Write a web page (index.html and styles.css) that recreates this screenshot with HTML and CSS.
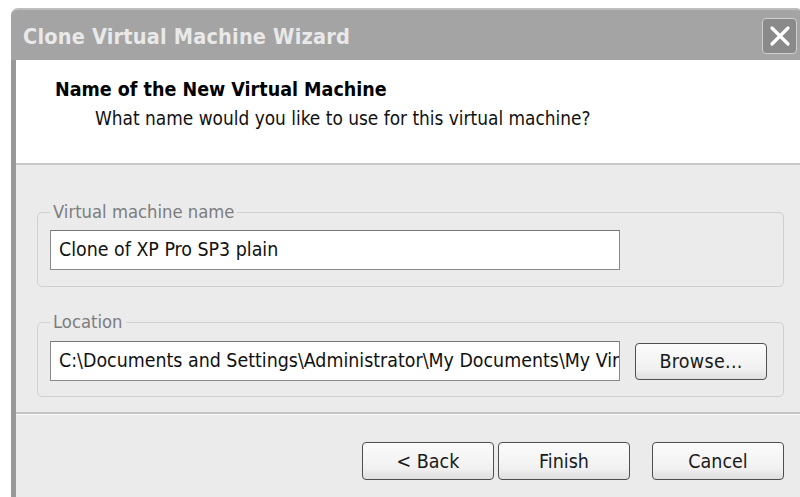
FILE: index.html
```html
<!DOCTYPE html>
<html lang="en">
<head>
<meta charset="utf-8">
<title>Clone Virtual Machine Wizard</title>
<link rel="stylesheet" href="styles.css">
</head>
<body>
<div class="window">
  <div class="titlebar">
    <span class="title">Clone Virtual Machine Wizard</span>
    <button class="close" aria-label="Close">
      <svg width="22" height="22" viewBox="0 0 22 22"><path d="M3 3 L19 19 M19 3 L3 19" stroke="#fff" stroke-width="3.2" stroke-linecap="round" fill="none"/></svg>
    </button>
  </div>
  <div class="frame">
    <div class="header">
      <h1 class="heading">Name of the New Virtual Machine</h1>
      <p class="subtitle">What name would you like to use for this virtual machine?</p>
    </div>
    <div class="content">
      <fieldset class="group group-name">
        <legend>Virtual machine name</legend>
        <div class="row">
          <div class="field">Clone of XP Pro SP3 plain</div>
        </div>
      </fieldset>
      <fieldset class="group group-location">
        <legend>Location</legend>
        <div class="row">
          <div class="field">C:\Documents and Settings\Administrator\My Documents\My Virtual Machines</div>
          <button class="btn browse">Browse...</button>
        </div>
      </fieldset>
      <div class="separator"></div>
      <div class="actions">
        <button class="btn">&lt; Back</button>
        <button class="btn">Finish</button>
        <button class="btn cancel">Cancel</button>
      </div>
    </div>
  </div>
</div>
</body>
</html>
```

FILE: styles.css
```css
html, body {
  margin: 0;
  padding: 0;
  background: #ffffff;
  overflow: hidden;
}

body {
  width: 800px;
  height: 497px;
  font-family: "DejaVu Sans Condensed", "DejaVu Sans", sans-serif;
}

.window {
  margin: 8px 0 0 11px;
  width: 792px;
}

.titlebar {
  height: 52px;
  box-sizing: border-box;
  background: #a4a4a4;
  border-top: 2px solid #bdbdbd;
  border-radius: 7px 7px 0 0;
  display: flex;
  align-items: center;
  padding-left: 12px;
}

.title {
  flex: 1;
  color: #e9e9e9;
  font-weight: bold;
  font-size: 21.5px;
  letter-spacing: 0.2px;
  padding-top: 3px;
}

.close {
  width: 35px;
  height: 36px;
  margin-right: 6px;
  margin-top: 2px;
  padding: 0;
  border: 1px solid #cfcfcf;
  border-radius: 4px;
  background: #8a8a8a;
  display: flex;
  align-items: center;
  justify-content: center;
}

.frame {
  border-left: 5px solid #989898;
  background: #ebebeb;
  height: 440px;
}

.header {
  background: #ffffff;
  height: 105px;
  box-sizing: border-box;
  padding: 18px 0 0 39px;
  border-bottom: 2px solid #c9c9c9;
}

.heading {
  margin: 0;
  font-size: 19.5px;
  line-height: 24px;
  font-weight: bold;
  color: #000;
}

.subtitle {
  margin: 4px 0 0 40px;
  font-size: 18.9px;
  line-height: 24px;
  color: #111;
}

.content {
  padding: 0 0 0 21px;
}

.group {
  margin: 0;
  width: 747px;
  box-sizing: border-box;
  border: 1px solid #d0d0d0;
  border-radius: 5px;
  padding: 0 12px;
}

.group legend {
  padding: 0 3px;
  font-size: 18.3px;
  line-height: 18px;
  color: #7d7d7d;
}

.group-name {
  margin-top: 38px;
  padding-bottom: 16px;
}

.group-location {
  margin-top: 26px;
  padding-bottom: 15px;
}

.group-name .row {
  margin-top: 9px;
}

.group-location .row {
  margin-top: 10px;
}

.row {
  display: flex;
  align-items: center;
}

.field {
  width: 570px;
  height: 40px;
  box-sizing: border-box;
  border: 1px solid #8a8a8a;
  border-top-color: #767676;
  background: #ffffff;
  padding: 0 8px;
  font-size: 19.4px;
  line-height: 38px;
  color: #111;
  white-space: nowrap;
  overflow: hidden;
  text-overflow: clip;
}

.btn {
  width: 132px;
  height: 38px;
  box-sizing: border-box;
  border: 1px solid #4f4f4f;
  border-radius: 4px;
  background: linear-gradient(#fbfbfb, #f1f1f1 70%, #dedede);
  font-family: "DejaVu Sans Condensed", "DejaVu Sans", sans-serif;
  font-size: 19.5px;
  color: #1a1a1a;
  padding: 0;
}

.browse {
  margin-left: 15px;
  height: 37px;
  letter-spacing: 0.3px;
}

.separator {
  margin-top: 15px;
  margin-left: -21px;
  height: 1px;
  border-top: 2px solid #c5c5c5;
  background: #f8f8f8;
}

.actions {
  display: flex;
  justify-content: flex-end;
  width: 747px;
  margin-top: 27px;
}

.actions .btn + .btn {
  margin-left: 4px;
}

.actions .btn.cancel {
  margin-left: 22px;
}
```
